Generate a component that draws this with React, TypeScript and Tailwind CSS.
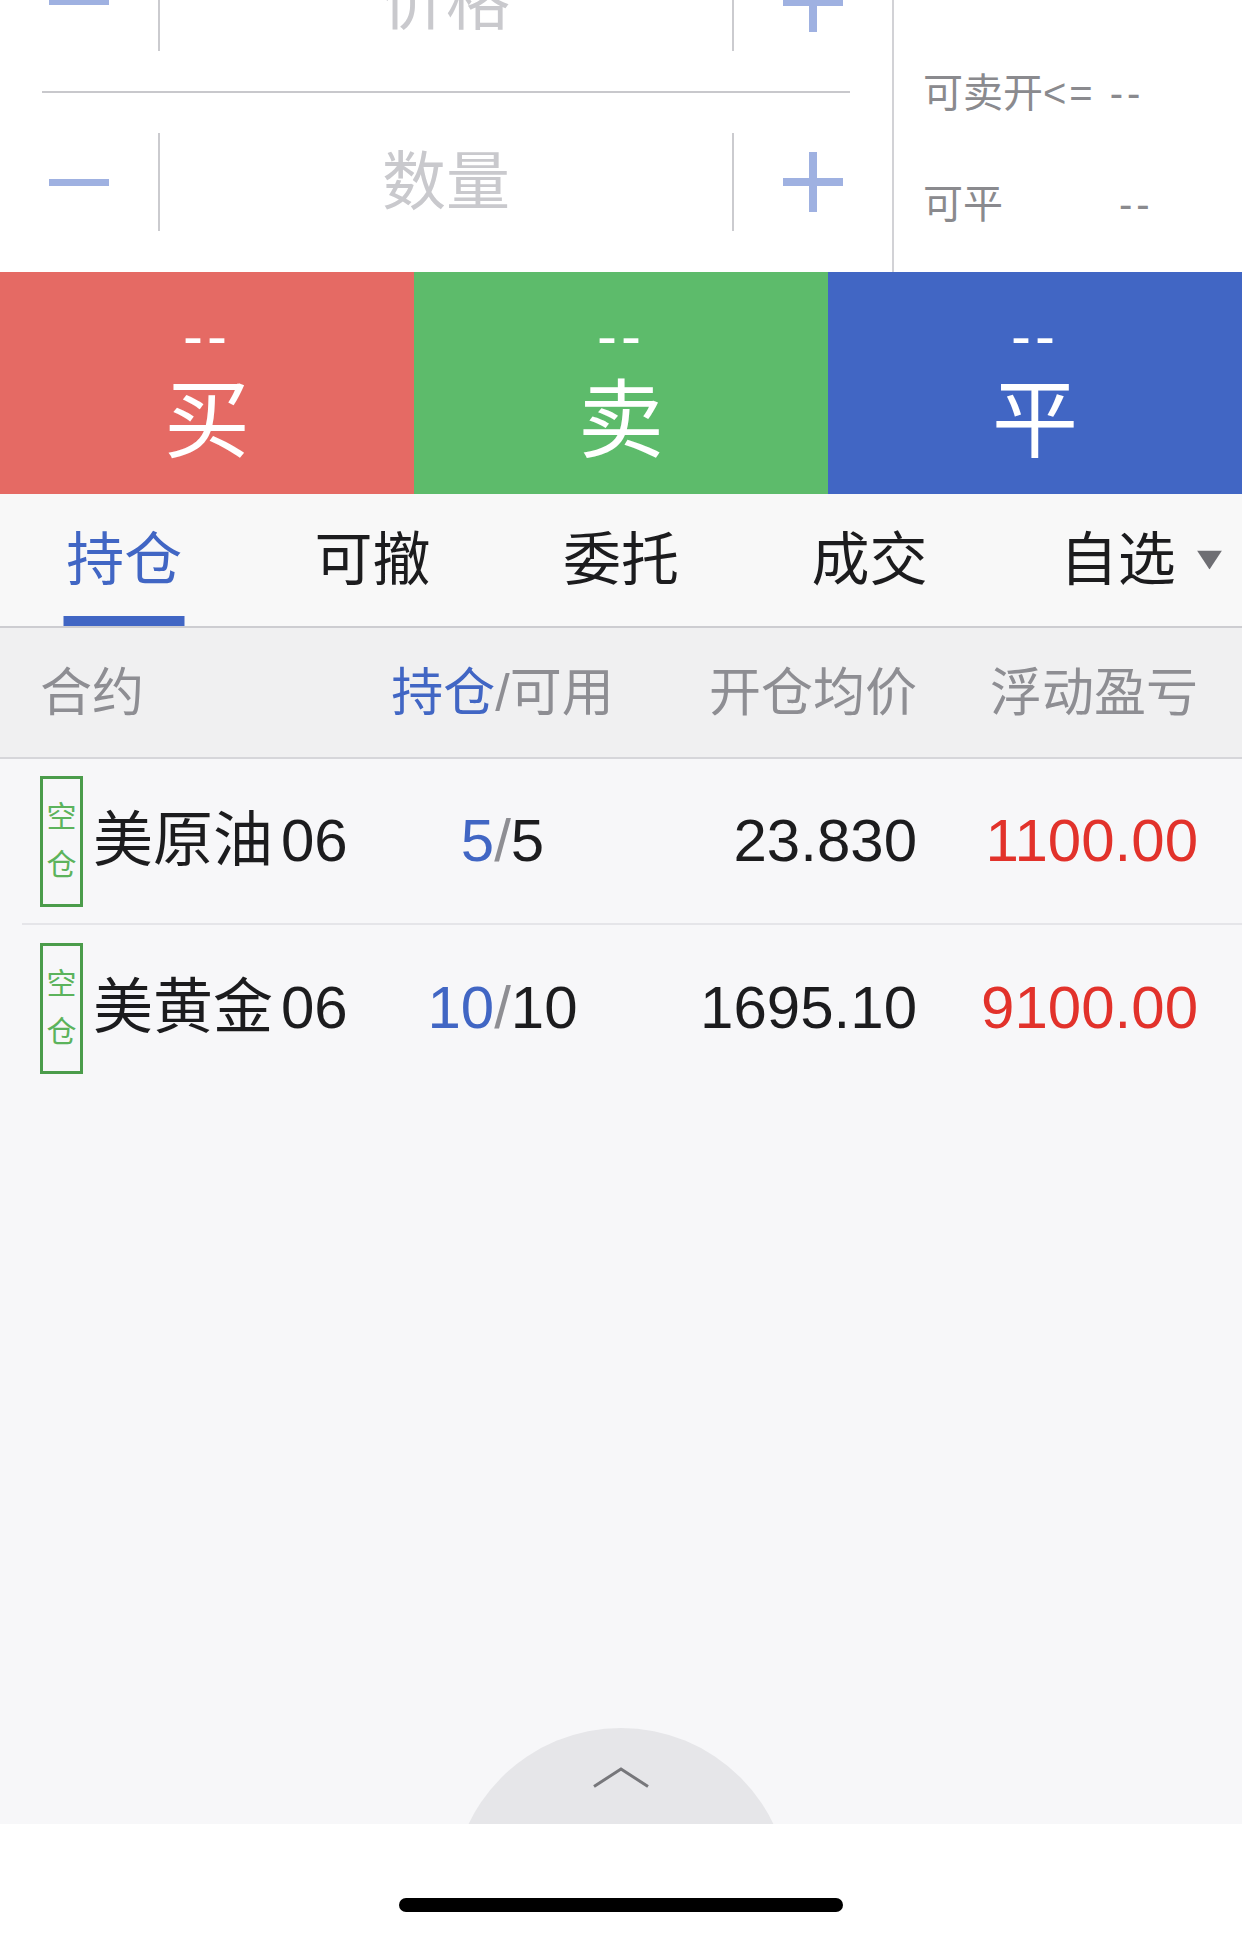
import React from 'react';

const BLUE = '#4166c4';

function Minus() {
  return <div className="w-[60px] h-[7px] bg-[#9fb1e1]" />;
}

function Plus() {
  return (
    <svg width="60" height="60" viewBox="0 0 60 60">
      <rect x="0" y="26" width="60" height="8" fill="#9fb1e1" />
      <rect x="26" y="0" width="8" height="60" fill="#9fb1e1" />
    </svg>
  );
}

function FormRow({ label }: { label: string }) {
  return (
    <div className="flex h-[180px] items-center">
      <div className="w-[158px] flex justify-center">
        <Minus />
      </div>
      <div className="w-[2px] h-[98px] bg-[#cbcbcf]" />
      <div className="flex-1 text-center text-[64px] leading-none text-[#c9c9cd]">{label}</div>
      <div className="w-[2px] h-[98px] bg-[#cbcbcf]" />
      <div className="w-[158px] flex justify-center">
        <Plus />
      </div>
    </div>
  );
}

function ActionButton({ label, color }: { label: string; color: string }) {
  return (
    <div className={`flex flex-col items-center pt-[44px] text-white ${color}`}>
      <div className="text-[60px] leading-[40px] tracking-[4px]">--</div>
      <div className="mt-[20px] text-[86px] leading-[90px]">{label}</div>
    </div>
  );
}

const tabs = ['持仓', '可撤', '委托', '成交', '自选'];

const positions = [
  { name: '美原油', code: '06', hold: '5', avail: '5', price: '23.830', pnl: '1100.00' },
  { name: '美黄金', code: '06', hold: '10', avail: '10', price: '1695.10', pnl: '9100.00' },
];

const cols = 'grid grid-cols-[360px_205px_312px_281px] items-center';

export default function App() {
  return (
    <div className="h-[1936px] w-[1242px] overflow-hidden flex flex-col font-['Liberation_Sans','Noto_Sans_CJK_SC',sans-serif]">
      {/* order form */}
      <div className="flex h-[272px] shrink-0 overflow-hidden bg-white">
        <div className="w-[892px] shrink-0 -mt-[88px] flex flex-col">
          <FormRow label="价格" />
          <div className="mx-[42px] h-[2px] bg-[#c8c8cc]" />
          <FormRow label="数量" />
        </div>
        <div className="flex-1 border-l-2 border-[#d2d2d6] -mt-[74px] flex flex-col text-[40px] leading-none text-[#8a8a8e]">
          <div className="h-[111px] flex items-center pl-[29px] whitespace-nowrap">
            可买开<span className="tracking-[3px]">&lt;=</span>
            <span className="ml-[14px] tracking-[4px]">--</span>
          </div>
          <div className="h-[111px] flex items-center pl-[29px] whitespace-nowrap">
            可卖开<span className="tracking-[3px]">&lt;=</span>
            <span className="ml-[14px] tracking-[4px]">--</span>
          </div>
          <div className="h-[111px] flex items-center pl-[29px] whitespace-nowrap">
            <span className="w-[196px]">可平</span>
            <span className="tracking-[4px]">--</span>
          </div>
        </div>
      </div>

      {/* buy / sell / close */}
      <div className="grid grid-cols-3 h-[222px] shrink-0">
        <ActionButton label="买" color="bg-[#e56a64]" />
        <ActionButton label="卖" color="bg-[#5dbb6b]" />
        <ActionButton label="平" color="bg-[#4166c4]" />
      </div>

      {/* tabs */}
      <div className="grid grid-cols-5 h-[134px] shrink-0 bg-[#f8f8f8] border-b-2 border-[#cdcdd1]">
        {tabs.map((t, i) => (
          <div key={t} className="relative flex items-center justify-center">
            <span
              className={`relative text-[58px] leading-none ${i === 0 ? 'text-[#4166c4]' : 'text-[#1c1c1e]'}`}
            >
              {t}
              {t === '自选' && (
                <svg
                  className="absolute left-full top-1/2 -translate-y-1/2 ml-[21px]"
                  width="25"
                  height="19"
                  viewBox="0 0 25 19"
                >
                  <polygon points="0,0 25,0 12.5,19" fill="#6e6e73" />
                </svg>
              )}
            </span>
            {i === 0 && (
              <div className="absolute bottom-0 left-1/2 -translate-x-1/2 w-[121px] h-[10px] bg-[#4166c4]" />
            )}
          </div>
        ))}
      </div>

      {/* table header */}
      <div className={`${cols} h-[131px] shrink-0 pl-[40px] bg-[#f0f0f1] border-b-2 border-[#d6d6da] text-[52px] leading-none text-[#8e8e93]`}>
        <div>合约</div>
        <div className="flex justify-center whitespace-nowrap">
          <span style={{ color: BLUE }}>持仓</span>
          <span>/可用</span>
        </div>
        <div className="text-right whitespace-nowrap">开仓均价</div>
        <div className="text-right whitespace-nowrap">浮动盈亏</div>
      </div>

      {/* rows */}
      <div className="flex-1 flex flex-col bg-[#f7f7f9]">
        {positions.map((p, i) => (
          <div
            key={p.name}
            className={`ml-[22px] h-[166px] shrink-0 ${i === 0 ? 'border-b-2 border-[#e5e5e9]' : ''}`}
          >
            <div className={`${cols} h-full pl-[18px] text-[60px] leading-none text-[#1c1c1e]`}>
              <div className="flex items-center whitespace-nowrap">
                <div className="w-[43px] h-[131px] border-[3px] border-[#4b9c4b] flex flex-col items-center justify-center text-[30px] leading-[48px] text-[#5cb35c]">
                  <span>空</span>
                  <span>仓</span>
                </div>
                <span className="ml-[10px]">{p.name}</span>
                <span className="ml-[8px]">{p.code}</span>
              </div>
              <div className="text-center">
                <span style={{ color: BLUE }}>{p.hold}</span>
                <span className="text-[#8e8e93]">/</span>
                <span>{p.avail}</span>
              </div>
              <div className="text-right">{p.price}</div>
              <div className="text-right text-[#e2322b]">{p.pnl}</div>
            </div>
          </div>
        ))}
      </div>

      {/* expand handle */}
      <div className="h-[96px] shrink-0 overflow-hidden flex justify-center bg-[#f7f7f9]">
        <div className="w-[338px] h-[338px] shrink-0 rounded-full bg-[#e6e6e9] flex justify-center">
          <svg className="mt-[39px]" width="56" height="21" viewBox="0 0 56 21">
            <polyline points="1,19.5 28,2 55,19.5" fill="none" stroke="#77777b" strokeWidth="3" />
          </svg>
        </div>
      </div>

      {/* home indicator */}
      <div className="h-[112px] shrink-0 bg-white flex justify-center">
        <div className="mt-[74px] w-[444px] h-[14px] rounded-full bg-black" />
      </div>
    </div>
  );
}
